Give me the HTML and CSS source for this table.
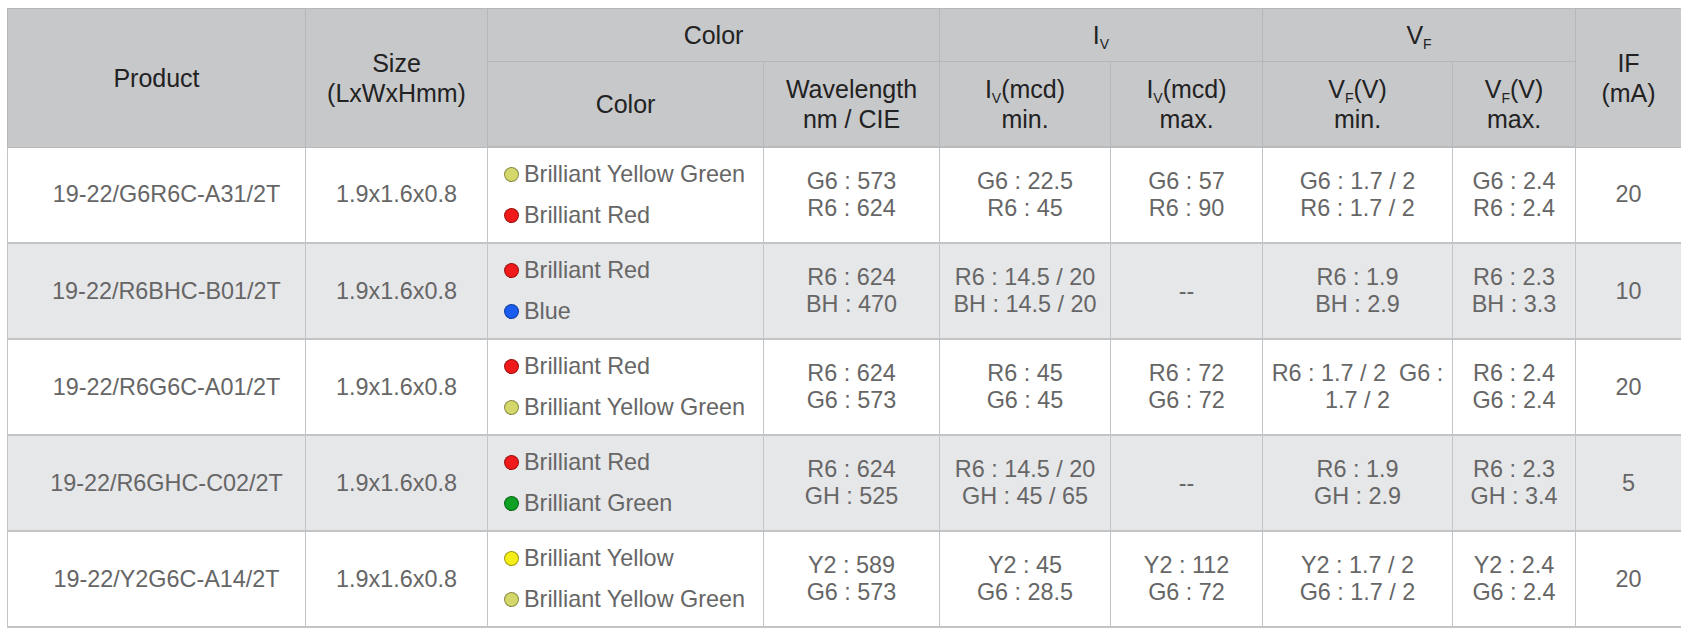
FILE: index.html
```html
<!DOCTYPE html>
<html lang="en">
<head>
<meta charset="utf-8">
<title>LED Product Table</title>
<link rel="stylesheet" href="styles.css">
</head>
<body>
<table class="spec">
  <colgroup>
    <col class="c-product">
    <col class="c-size">
    <col class="c-color">
    <col class="c-wave">
    <col class="c-ivmin">
    <col class="c-ivmax">
    <col class="c-vfmin">
    <col class="c-vfmax">
    <col class="c-if">
  </colgroup>
  <thead>
    <tr class="h1">
      <th rowspan="2">Product</th>
      <th rowspan="2">Size<br>(LxWxHmm)</th>
      <th colspan="2">Color</th>
      <th colspan="2">I<sub>V</sub></th>
      <th colspan="2">V<sub>F</sub></th>
      <th rowspan="2">IF<br>(mA)</th>
    </tr>
    <tr class="h2">
      <th>Color</th>
      <th>Wavelength<br>nm / CIE</th>
      <th>I<sub>V</sub>(mcd)<br>min.</th>
      <th>I<sub>V</sub>(mcd)<br>max.</th>
      <th>V<sub>F</sub>(V)<br>min.</th>
      <th>V<sub>F</sub>(V)<br>max.</th>
    </tr>
  </thead>
  <tbody>
    <tr>
      <td class="product">19-22/G6R6C-A31/2T</td>
      <td>1.9x1.6x0.8</td>
      <td class="colors">
        <span class="item"><span class="dot yg"></span>Brilliant Yellow Green</span>
        <span class="item"><span class="dot red"></span>Brilliant Red</span>
      </td>
      <td>G6 : 573<br>R6 : 624</td>
      <td>G6 : 22.5<br>R6 : 45</td>
      <td>G6 : 57<br>R6 : 90</td>
      <td>G6 : 1.7 / 2<br>R6 : 1.7 / 2</td>
      <td>G6 : 2.4<br>R6 : 2.4</td>
      <td>20</td>
    </tr>
    <tr class="alt">
      <td class="product">19-22/R6BHC-B01/2T</td>
      <td>1.9x1.6x0.8</td>
      <td class="colors">
        <span class="item"><span class="dot red"></span>Brilliant Red</span>
        <span class="item"><span class="dot blue"></span>Blue</span>
      </td>
      <td>R6 : 624<br>BH : 470</td>
      <td>R6 : 14.5 / 20<br>BH : 14.5 / 20</td>
      <td>--</td>
      <td>R6 : 1.9<br>BH : 2.9</td>
      <td>R6 : 2.3<br>BH : 3.3</td>
      <td>10</td>
    </tr>
    <tr>
      <td class="product">19-22/R6G6C-A01/2T</td>
      <td>1.9x1.6x0.8</td>
      <td class="colors">
        <span class="item"><span class="dot red"></span>Brilliant Red</span>
        <span class="item"><span class="dot yg"></span>Brilliant Yellow Green</span>
      </td>
      <td>R6 : 624<br>G6 : 573</td>
      <td>R6 : 45<br>G6 : 45</td>
      <td>R6 : 72<br>G6 : 72</td>
      <td>R6 : 1.7 / 2&nbsp; G6 : 1.7 / 2</td>
      <td>R6 : 2.4<br>G6 : 2.4</td>
      <td>20</td>
    </tr>
    <tr class="alt">
      <td class="product">19-22/R6GHC-C02/2T</td>
      <td>1.9x1.6x0.8</td>
      <td class="colors">
        <span class="item"><span class="dot red"></span>Brilliant Red</span>
        <span class="item"><span class="dot green"></span>Brilliant Green</span>
      </td>
      <td>R6 : 624<br>GH : 525</td>
      <td>R6 : 14.5 / 20<br>GH : 45 / 65</td>
      <td>--</td>
      <td>R6 : 1.9<br>GH : 2.9</td>
      <td>R6 : 2.3<br>GH : 3.4</td>
      <td>5</td>
    </tr>
    <tr>
      <td class="product">19-22/Y2G6C-A14/2T</td>
      <td>1.9x1.6x0.8</td>
      <td class="colors">
        <span class="item"><span class="dot yellow"></span>Brilliant Yellow</span>
        <span class="item"><span class="dot yg"></span>Brilliant Yellow Green</span>
      </td>
      <td>Y2 : 589<br>G6 : 573</td>
      <td>Y2 : 45<br>G6 : 28.5</td>
      <td>Y2 : 112<br>G6 : 72</td>
      <td>Y2 : 1.7 / 2<br>G6 : 1.7 / 2</td>
      <td>Y2 : 2.4<br>G6 : 2.4</td>
      <td>20</td>
    </tr>
  </tbody>
</table>
</body>
</html>
```

FILE: styles.css
```css
html, body {
  background: #ffffff;
}
body {
  margin: 8px 5px 0 7px;
  font-family: "Liberation Sans", Arial, sans-serif;
}
.spec {
  width: 1674px;
  border-collapse: collapse;
  table-layout: fixed;
  border: 1px solid #bdbec0;
}
.c-product { width: 298px; }
.c-size { width: 182px; }
.c-color { width: 276px; }
.c-wave { width: 176px; }
.c-ivmin { width: 171px; }
.c-ivmax { width: 152px; }
.c-vfmin { width: 190px; }
.c-vfmax { width: 123px; }
.c-if { width: 106px; }

.spec th {
  background: #c7c8ca;
  color: #222222;
  font-weight: normal;
  font-size: 25px;
  line-height: 30px;
  text-align: center;
  vertical-align: middle;
  border: 1px solid #b6b7b9;
  padding: 0 6px;
}
.spec thead tr.h1 th { height: 52px; }
.spec thead tr.h2 th { height: 84px; }
.spec thead tr.h2 th { border-bottom: 2px solid #b9babc; }
.spec sub {
  font-size: 14px;
  line-height: 0;
  vertical-align: -5px;
}
.spec td {
  background: #ffffff;
  color: #666666;
  font-size: 23.4px;
  line-height: 27px;
  text-align: center;
  vertical-align: middle;
  border-left: 1px solid #c3c4c6;
  border-right: 1px solid #c3c4c6;
  border-bottom: 2px solid #c3c4c6;
  padding: 0 8px;
  height: 94px;
}
.spec td.product {
  padding-left: 26px;
  padding-right: 6px;
}
.spec tr.alt td {
  background: #e6e7e9;
}
.spec td.colors {
  text-align: left;
  padding-left: 16px;
  white-space: nowrap;
}
.item {
  display: flex;
  align-items: center;
  line-height: 41px;
}
.dot {
  display: inline-block;
  width: 15px;
  height: 15px;
  border-radius: 50%;
  margin-right: 5px;
  box-sizing: border-box;
  border: 1px solid rgba(0, 0, 0, 0.35);
  flex: none;
}
.dot.yg { background: #d4d86a; }
.dot.red { background: #f01a1a; }
.dot.blue { background: #1a5cf0; }
.dot.green { background: #10a024; }
.dot.yellow { background: #f6ee18; }
```
